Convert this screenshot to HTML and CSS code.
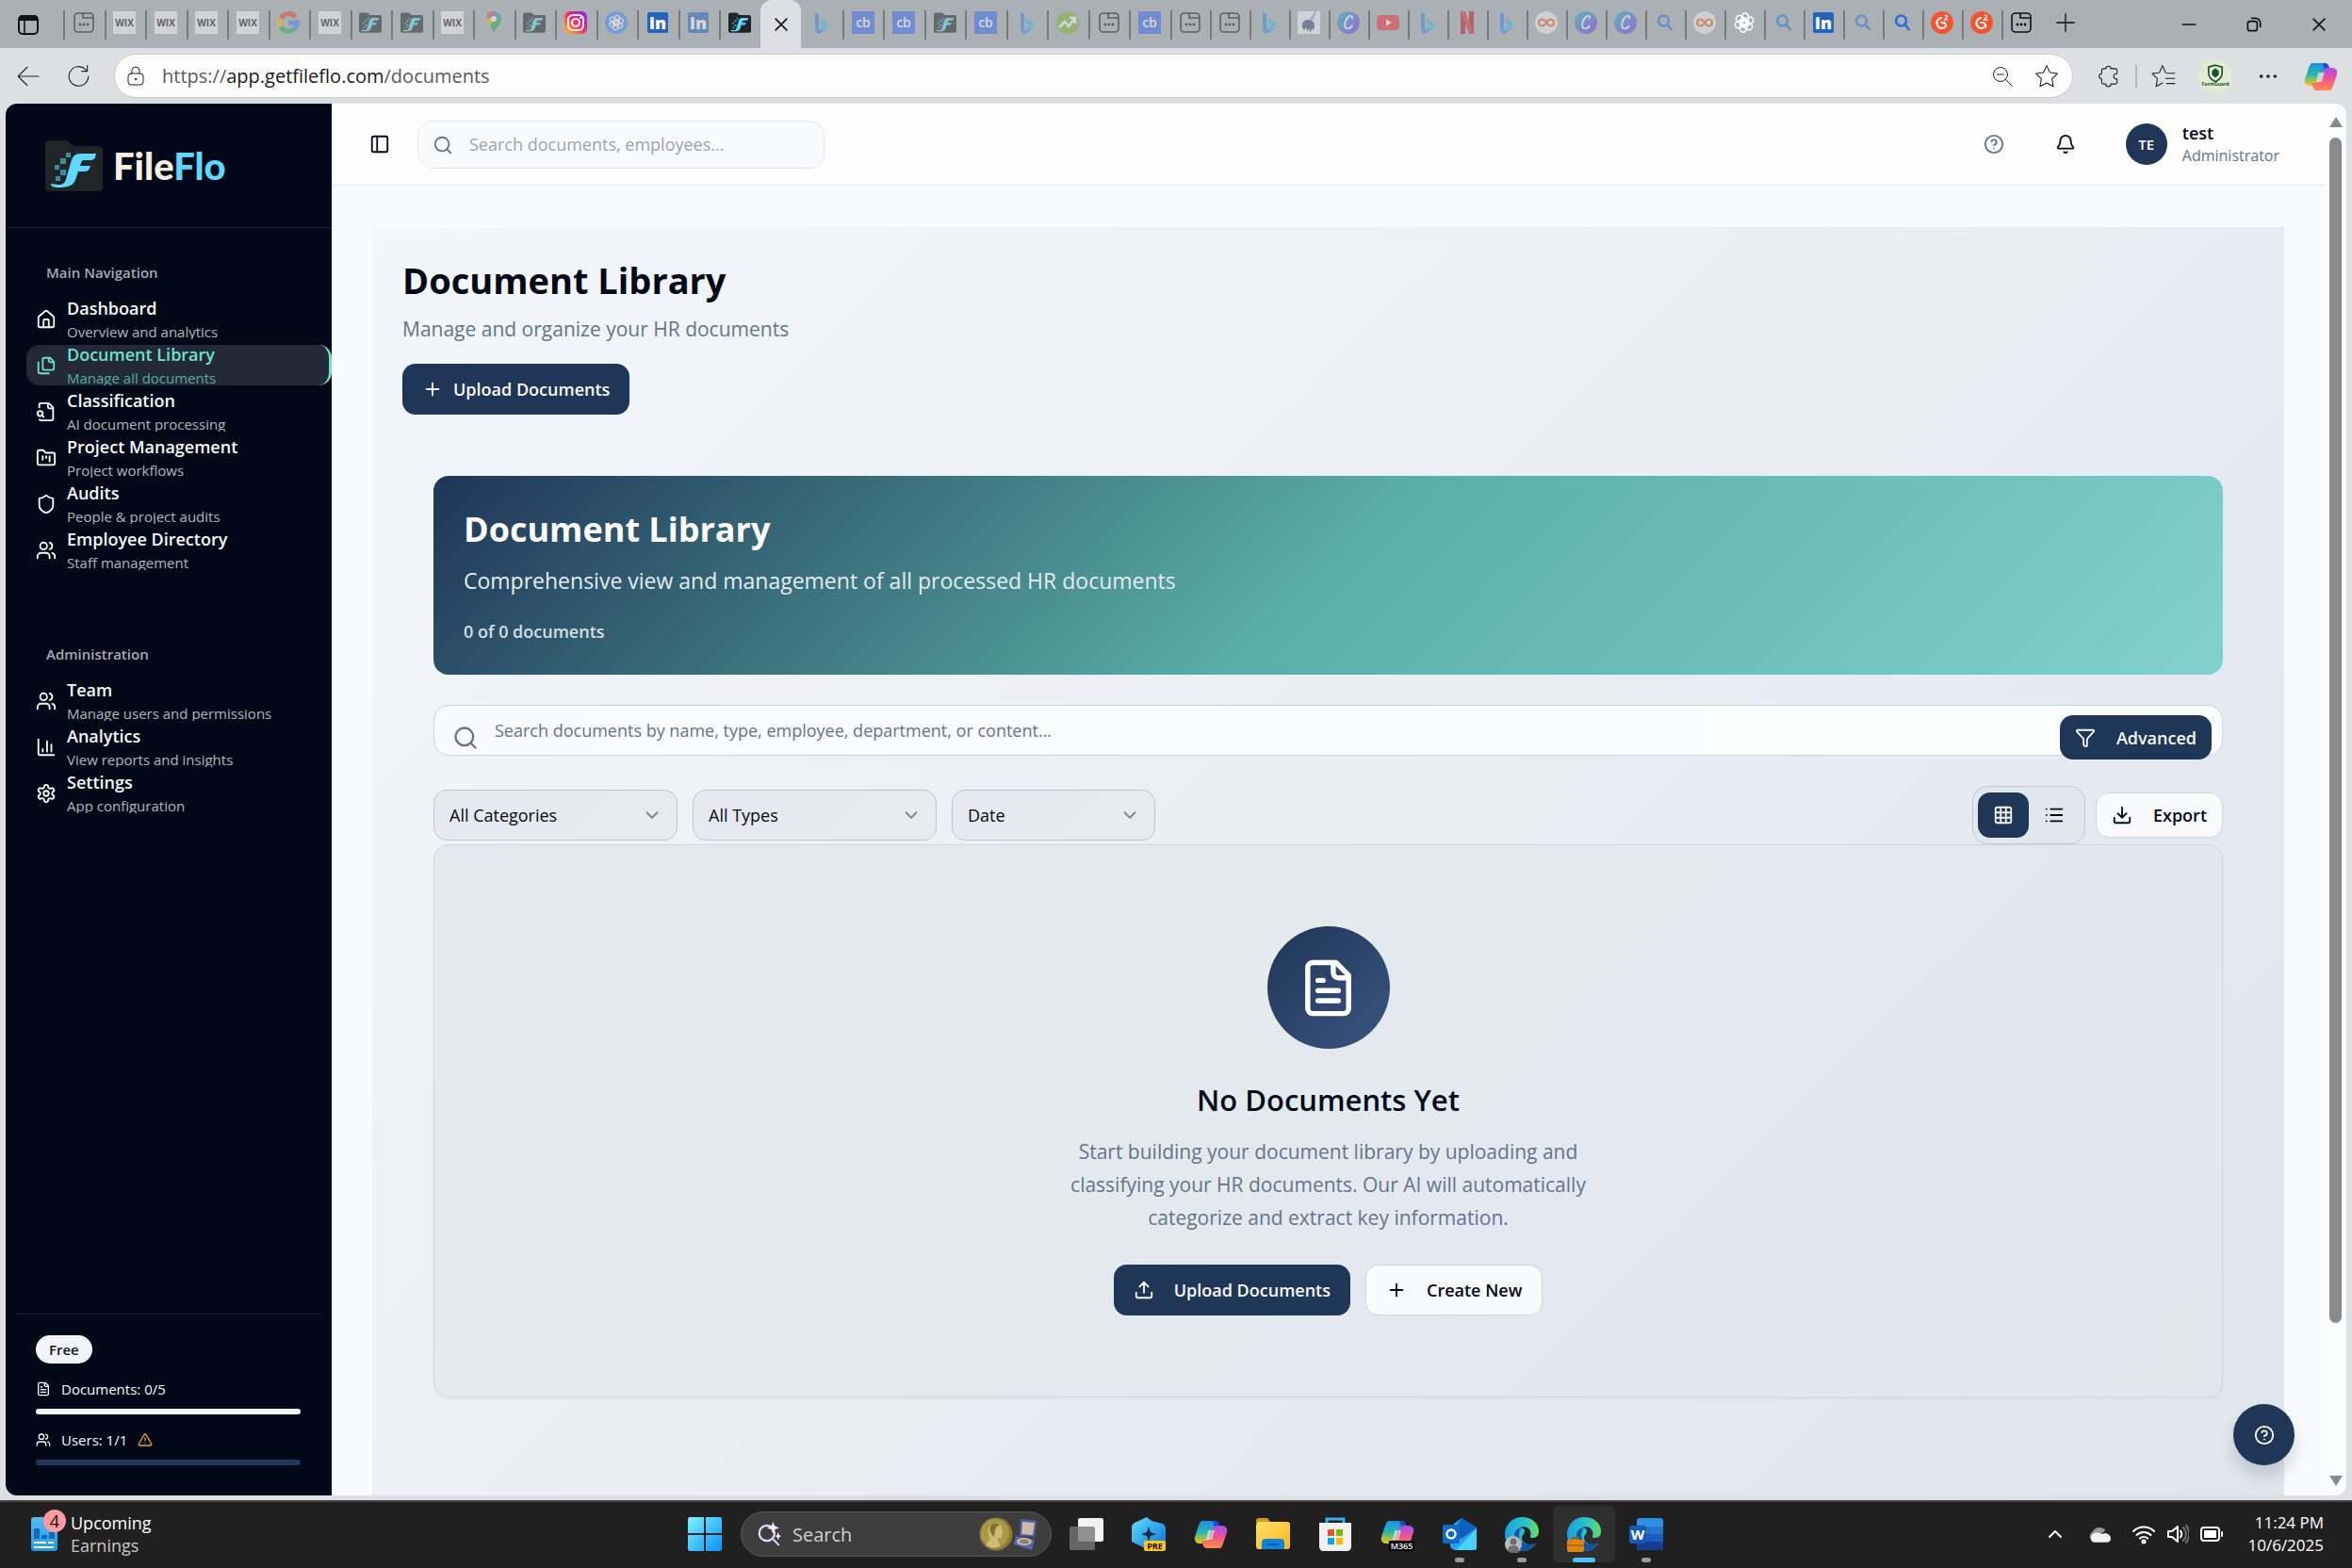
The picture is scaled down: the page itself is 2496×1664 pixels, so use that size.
FILE: index.html
```html
<!DOCTYPE html>
<html lang="en">
<head>
  <meta charset="UTF-8">
  <title>FileFlo - Document Library</title>
  <link rel="stylesheet" href="styles.css">
</head>
<body>

  <!-- Gradients shared by the icons (must stay rendered, so not display: none) -->
  <svg class="gradients" aria-hidden="true">
    <defs>
      <linearGradient id="g-bing" x1="0" y1="0" x2="0" y2="1"><stop offset="0" stop-color="#3a9be0"/><stop offset=".6" stop-color="#4cc3ea"/><stop offset="1" stop-color="#3c63dd"/></linearGradient>
      <linearGradient id="g-canva" x1="0" y1="0" x2="1" y2="1"><stop offset="0" stop-color="#15b9c5"/><stop offset="1" stop-color="#7d2ae8"/></linearGradient>
      <linearGradient id="g-insta" x1="0" y1="1" x2="1" y2="0"><stop offset="0" stop-color="#ffc93c"/><stop offset=".35" stop-color="#ff5a36"/><stop offset=".6" stop-color="#f0188c"/><stop offset="1" stop-color="#7a2bff"/></linearGradient>
      <linearGradient id="g-win" x1="0" y1="0" x2="1" y2="1"><stop offset="0" stop-color="#7df3ff"/><stop offset="1" stop-color="#0a90fa"/></linearGradient>
      <linearGradient id="g-cop1" x1="0" y1="0" x2="0" y2="1"><stop offset="0" stop-color="#1c8fe8"/><stop offset=".5" stop-color="#29b6b0"/><stop offset="1" stop-color="#ffc800"/></linearGradient>
      <linearGradient id="g-cop2" x1="0" y1="0" x2="0" y2="1"><stop offset="0" stop-color="#a64df0"/><stop offset=".5" stop-color="#f0568c"/><stop offset="1" stop-color="#ff8a4c"/></linearGradient>
      <linearGradient id="g-edge" x1="0" y1="0" x2="1" y2="0"><stop offset="0" stop-color="#1aa0e0"/><stop offset=".6" stop-color="#2cc4c8"/><stop offset="1" stop-color="#6adf5a"/></linearGradient>
      <linearGradient id="g-folder" x1="0" y1="0" x2="1" y2="1"><stop offset="0" stop-color="#ffdf6b"/><stop offset="1" stop-color="#fbb81a"/></linearGradient>
      <linearGradient id="g-pre" x1="0" y1="0" x2="1" y2="1"><stop offset="0" stop-color="#5fe0fb"/><stop offset="1" stop-color="#0a6fd8"/></linearGradient>
      <linearGradient id="g-widget" x1="0" y1="0" x2="0" y2="1"><stop offset="0" stop-color="#5cb8f5"/><stop offset="1" stop-color="#1d9bdf"/></linearGradient>
    </defs>
  </svg>

  <!-- Icon sprite -->
  <svg class="sprite" aria-hidden="true">
    <!-- Favicons -->
    <symbol id="f-page" viewBox="0 0 24 24"><g fill="none" stroke="#111" stroke-width="1.6"><rect x="2" y="2" width="20" height="20" rx="4"/><path d="M11 2v5h11"/></g><g fill="#111"><circle cx="8" cy="14" r="1.4"/><circle cx="12" cy="14" r="1.4"/><circle cx="16" cy="14" r="1.4"/></g></symbol>
    <symbol id="f-wix" viewBox="0 0 24 24"><rect width="24" height="24" fill="#f4f6f8"/><text x="12" y="16" text-anchor="middle" font-size="10" font-weight="700" fill="#111">WIX</text></symbol>
    <symbol id="f-google" viewBox="0 0 24 24"><g fill="none" stroke-width="5"><path d="M19.500 6.200A9.300 9.300 0 0 0 4 7.500" stroke="#ea4335"/><path d="M4 7.500a9.300 9.300 0 0 0 0 9" stroke="#fbbc05"/><path d="M4 16.500a9.300 9.300 0 0 0 14 2.500" stroke="#34a853"/><path d="M18 19a9 9 0 0 0 3.200-7H12" stroke="#4285f4"/></g></symbol>
    <symbol id="f-fileflo" viewBox="0 0 61 55"><path d="M0 6q0-5 5-5h18l7 6h26q5 0 5 5v38q0 5-5 5H5q-5 0-5-5z" fill="#212528"/><path d="M54 15H38c-7 0-9 3-11 10l-5 17c-1 4-3 6-8 6l-8-1c0 3 3 4 8 4 14 0 17-4 19-11l2-6h7c3 0 5-2 6-6H37l1-3c1-3 2-3 4-3h6c4 0 5-2 6-7z" fill="#5fd9fb"/><g fill="#3c8ca3"><rect x="22" y="14" width="5" height="5"/><rect x="16" y="20" width="6" height="6"/><rect x="10" y="27" width="5" height="5"/><rect x="16" y="32" width="6" height="6"/><rect x="11" y="39" width="5" height="5"/></g></symbol>
    <symbol id="f-maps" viewBox="0 0 24 24"><path d="M12 0a8 8 0 0 0-8 8h16a8 8 0 0 0-8-8z" fill="#4285f4"/><path d="M12 0a8 8 0 0 0-7 4l5 4z" fill="#ea4335"/><path d="M4 8c0 3 2 5 4 7l7-9-5 0z" fill="#fbbc05"/><path d="M20 8c0 7-6 8-8 16-1-4-2-6-4-9l9-11c2 1 3 3 3 4z" fill="#34a853"/><circle cx="12" cy="8" r="3" fill="#fff"/></symbol>
    <symbol id="f-insta" viewBox="0 0 24 24"><rect width="24" height="24" rx="6" fill="url(#g-insta)"/><g fill="none" stroke="#fff" stroke-width="2"><rect x="4" y="4" width="16" height="16" rx="5"/><circle cx="12" cy="12" r="4"/></g><circle cx="17" cy="7" r="1.200" fill="#fff"/></symbol>
    <symbol id="i-knot" viewBox="0 0 24 24"><g fill="none" stroke="currentColor" stroke-width="1.500"><rect x="9.500" y="2" width="7" height="12.500" rx="3.500"/><rect x="9.500" y="2" width="7" height="12.500" rx="3.500" transform="rotate(60 12 12)"/><rect x="9.500" y="2" width="7" height="12.500" rx="3.500" transform="rotate(120 12 12)"/><rect x="9.500" y="2" width="7" height="12.500" rx="3.500" transform="rotate(180 12 12)"/><rect x="9.500" y="2" width="7" height="12.500" rx="3.500" transform="rotate(240 12 12)"/><rect x="9.500" y="2" width="7" height="12.500" rx="3.500" transform="rotate(300 12 12)"/></g></symbol>
    <symbol id="f-gptblue" viewBox="0 0 24 24"><circle cx="12" cy="12" r="12" fill="#4a8af4"/><svg x="3" y="3" width="18" height="18" color="#fff"><use href="#i-knot"/></svg></symbol>
    <symbol id="f-linkedin" viewBox="0 0 24 24"><rect x="1" y="1" width="22" height="22" rx="2" fill="#2464c0"/><text x="12" y="19" text-anchor="middle" font-size="18" font-weight="800" fill="#fff">in</text></symbol>
    <symbol id="f-bing" viewBox="0 0 24 24"><path d="M5 1l4 1.500V17l-1 5-3-2z" fill="#3a7fe8"/><path d="M10.500 8l6 3c3 2 3 5 1 8l-7 4c-2 1-4 0-5-2l7-5-1-4z" fill="url(#g-bing)"/></symbol>
    <symbol id="f-cb" viewBox="0 0 24 24"><rect width="24" height="24" fill="#3c69f0"/><text x="12" y="17" text-anchor="middle" font-size="14" font-weight="600" fill="#fff">cb</text></symbol>
    <symbol id="f-chart" viewBox="0 0 24 24"><circle cx="12" cy="12" r="12" fill="#82b541"/><path d="M3 17l6-6 4 5 6-8M14 7h6v6" fill="none" stroke="#fff" stroke-width="2.600"/></symbol>
    <symbol id="f-horse" viewBox="0 0 24 24"><rect width="24" height="24" fill="#f2f5fa"/><path d="M13 9l6-9 1 1-5 9z" fill="#8b97b3"/><path d="M5 17c-1-5 2-8 6-8s7 2 7 7l-1 4-2-2-1 5-2-5-1 4-2-5-2 3z" fill="#3d527c"/></symbol>
    <symbol id="f-canva" viewBox="0 0 24 24"><circle cx="12" cy="12" r="12" fill="url(#g-canva)"/><path d="M16 8c1-4-3-4-5-1-3 3-4 10-1 11 3 1 5-1 6-3" fill="none" stroke="#fff" stroke-width="1.800"/></symbol>
    <symbol id="f-youtube" viewBox="0 0 24 24"><rect y="4" width="24" height="16" rx="4" fill="#f03040"/><path d="M10 8.500v7l6-3.500z" fill="#fff"/></symbol>
    <symbol id="f-netflix" viewBox="0 0 24 24"><path d="M5 0h5v24H5zM14 0h5v24h-5z" fill="#b81d24"/><path d="M5 0h5l9 24h-5z" fill="#e5333a"/></symbol>
    <symbol id="f-loop" viewBox="0 0 24 24"><circle cx="12" cy="12" r="12" fill="#f4efec"/><path d="M12 12c-3-5-8-4-8 0s5 5 8 0 8-4 8 0-5 5-8 0z" fill="none" stroke="#e8622c" stroke-width="2"/></symbol>
    <symbol id="f-search" viewBox="0 0 24 24"><g fill="none" stroke="#2a6fdc" stroke-width="2.600"><circle cx="10.500" cy="10" r="5.500"/><path d="M14.500 14l5 6"/></g></symbol>
    <symbol id="f-g2" viewBox="0 0 24 24"><circle cx="12" cy="12" r="12" fill="#f9522f"/><path d="M12 7a5.500 5.500 0 1 0 4.500 8.500l-2-3.500h-4" fill="none" stroke="#fff" stroke-width="2"/><path d="M14.500 5c2-2 4 0 2.500 1.500L14.500 9h4" fill="none" stroke="#fff" stroke-width="1.200"/></symbol>

    <!-- Browser icons -->
    <symbol id="i-tabmenu" viewBox="0 0 24 24"><rect x="2" y="3" width="20" height="19" rx="4" fill="none" stroke="currentColor" stroke-width="2"/><path d="M2 8V6q0-4 4-4h12q4 0 4 4v2z" fill="currentColor"/><path d="M8 8v14" stroke="currentColor" stroke-width="1.600"/></symbol>
    <symbol id="i-close" viewBox="0 0 24 24"><path d="M5 5l14 14M19 5L5 19"/></symbol>
    <symbol id="i-plus" viewBox="0 0 24 24"><path d="M5 12h14M12 5v14"/></symbol>
    <symbol id="i-min" viewBox="0 0 24 24"><path d="M4 12h16"/></symbol>
    <symbol id="i-restore" viewBox="0 0 24 24"><rect x="4" y="8" width="12" height="12" rx="3"/><path d="M9 4h5a6 6 0 0 1 6 6v5"/></symbol>
    <symbol id="i-back" viewBox="0 0 24 24"><path d="M22 12H2M11 3l-9 9 9 9"/></symbol>
    <symbol id="i-reload" viewBox="0 0 24 24"><path d="M21 12a9.500 9.500 0 1 1-3-7l2 2M20 1.500V7h-5.500"/></symbol>
    <symbol id="i-lock" viewBox="0 0 24 24"><rect x="4" y="9" width="16" height="12" rx="3"/><path d="M8 9V6a4 4 0 0 1 8 0v3"/><circle cx="12" cy="15" r=".8"/></symbol>
    <symbol id="i-zoomout" viewBox="0 0 24 24"><circle cx="10" cy="10" r="7.500"/><path d="M15.500 15.500l7 7M6.500 10h7"/></symbol>
    <symbol id="i-star" viewBox="0 0 24 24"><path d="M12 1.500l3.200 6.800 7.300 1-5.300 5.200 1.300 7.500L12 18.400 5.500 22l1.300-7.500L1.500 9.300l7.300-1z"/></symbol>
    <symbol id="i-puzzle" viewBox="0 0 24 24"><path d="M9 4.500a2.500 2.500 0 0 1 5 0h4.500a1.500 1.500 0 0 1 1.500 1.500v3.500a2.600 2.600 0 1 0 0 5V18a1.500 1.500 0 0 1-1.500 1.500H14a2.500 2.500 0 0 1-5 0H6.500A1.500 1.500 0 0 1 5 18v-3.500a2.500 2.500 0 0 1 0-5V6a1.500 1.500 0 0 1 1.500-1.500z"/></symbol>
    <symbol id="i-favs" viewBox="0 0 24 24"><path d="M14 8.500L11 1.500 8 8.300l-7 1 5 5.200L4.700 22l6.300-3.600M15 9h8M14 14h9M15 19h8"/></symbol>
    <symbol id="i-dots" viewBox="0 0 24 24"><g fill="currentColor" stroke="none"><circle cx="4" cy="12" r="2"/><circle cx="12" cy="12" r="2"/><circle cx="20" cy="12" r="2"/></g></symbol>
    <symbol id="i-farm" viewBox="0 0 35 35"><circle cx="17.500" cy="17.500" r="17.500" fill="#e2ecd0"/><path d="M17.500 6l7 2v6c0 4-3 7-7 9-4-2-7-5-7-9V8z" fill="none" stroke="#175033" stroke-width="1.600"/><path d="M14 12l3.500-3 3.500 3v4l-3.500 3-3.500-3z" fill="#175033"/><text x="17.500" y="27" text-anchor="middle" font-size="5" font-weight="700" fill="#175033">FarmGuard</text></symbol>
    <symbol id="i-copilot" viewBox="0 0 36 36"><path d="M9 4h13c3 0 4 2 5 5l1 3h-5c-3 0-4 2-5 5l-2 7c-1 3-2 4-5 4H6c-4 0-6-3-5-7l4-12c1-3 2-5 4-5z" fill="url(#g-cop1)"/><path d="M20 4h2c3 0 4 2 5 5l1 3h-6z" fill="#1a4bd0"/><path d="M27 32H14c-3 0-4-2-5-5l-1-3h5c3 0 4-2 5-5l2-7c1-3 2-4 5-4h5c4 0 6 3 5 7l-4 12c-1 3-2 5-4 5z" fill="url(#g-cop2)" transform="translate(0 1)"/><path d="M15 14h7l-3 10h-6z" class="copilot-gap"/></symbol>

    <!-- App icons -->
    <symbol id="i-panel" viewBox="0 0 24 24"><rect x="3" y="3" width="18" height="18" rx="2"/><path d="M9 3v18"/></symbol>
    <symbol id="i-search" viewBox="0 0 24 24"><circle cx="11" cy="11" r="8"/><path d="m21 21-4.300-4.300"/></symbol>
    <symbol id="i-help" viewBox="0 0 24 24"><circle cx="12" cy="12" r="10"/><path d="M9.090 9a3 3 0 0 1 5.830 1c0 2-3 3-3 3M12 17h.01"/></symbol>
    <symbol id="i-bell" viewBox="0 0 24 24"><path d="M10.270 21a2 2 0 0 0 3.460 0M3.260 15.330A1 1 0 0 0 4 17h16a1 1 0 0 0 .74-1.670C19.410 13.960 18 12.500 18 8A6 6 0 0 0 6 8c0 4.500-1.410 5.960-2.740 7.330"/></symbol>
    <symbol id="i-house" viewBox="0 0 24 24"><path d="M15 21v-8a1 1 0 0 0-1-1h-4a1 1 0 0 0-1 1v8"/><path d="M3 10a2 2 0 0 1 .709-1.528l7-5.999a2 2 0 0 1 2.582 0l7 5.999A2 2 0 0 1 21 10v9a2 2 0 0 1-2 2H5a2 2 0 0 1-2-2z"/></symbol>
    <symbol id="i-filecopy" viewBox="0 0 24 24"><path d="M15 3v3a2 2 0 0 0 2 2h4"/><path d="M10 3h6.500L21 7.500V15a2 2 0 0 1-2 2h-9a2 2 0 0 1-2-2V5a2 2 0 0 1 2-2z"/><path d="M3 8v11a2 2 0 0 0 2 2h10"/></symbol>
    <symbol id="i-filesearch" viewBox="0 0 24 24"><path d="M14 2v4a2 2 0 0 0 2 2h4"/><path d="M4.268 21a2 2 0 0 0 1.727 1H18a2 2 0 0 0 2-2V7l-5-5H6a2 2 0 0 0-2 2v3"/><path d="m9 18-1.500-1.500"/><circle cx="5" cy="14" r="3"/></symbol>
    <symbol id="i-kanban" viewBox="0 0 24 24"><path d="M4 20h16a2 2 0 0 0 2-2V8a2 2 0 0 0-2-2h-7.930a2 2 0 0 1-1.660-.9l-.82-1.200A2 2 0 0 0 7.930 3H4a2 2 0 0 0-2 2v13c0 1.100.9 2 2 2Z"/><path d="M8 10v4M12 10v2M16 10v6"/></symbol>
    <symbol id="i-shield" viewBox="0 0 24 24"><path d="M20 13c0 5-3.500 7.500-7.660 8.950a1 1 0 0 1-.67-.01C7.500 20.500 4 18 4 13V6a1 1 0 0 1 1-1c2 0 4.500-1.200 6.240-2.720a1.170 1.170 0 0 1 1.520 0C14.510 3.810 17 5 19 5a1 1 0 0 1 1 1z"/></symbol>
    <symbol id="i-users" viewBox="0 0 24 24"><path d="M16 21v-2a4 4 0 0 0-4-4H6a4 4 0 0 0-4 4v2"/><circle cx="9" cy="7" r="4"/><path d="M22 21v-2a4 4 0 0 0-3-3.870M16 3.130a4 4 0 0 1 0 7.750"/></symbol>
    <symbol id="i-chart" viewBox="0 0 24 24"><path d="M3 3v16a2 2 0 0 0 2 2h16M18 17V9M13 17V5M8 17v-3"/></symbol>
    <symbol id="i-gear" viewBox="0 0 24 24"><path d="M12.220 2h-.44a2 2 0 0 0-2 2v.18a2 2 0 0 1-1 1.730l-.43.25a2 2 0 0 1-2 0l-.15-.08a2 2 0 0 0-2.730.73l-.22.38a2 2 0 0 0 .73 2.730l.15.1a2 2 0 0 1 1 1.720v.51a2 2 0 0 1-1 1.740l-.15.09a2 2 0 0 0-.73 2.730l.22.38a2 2 0 0 0 2.730.73l.15-.08a2 2 0 0 1 2 0l.43.25a2 2 0 0 1 1 1.730V20a2 2 0 0 0 2 2h.44a2 2 0 0 0 2-2v-.18a2 2 0 0 1 1-1.730l.43-.25a2 2 0 0 1 2 0l.15.08a2 2 0 0 0 2.730-.73l.22-.39a2 2 0 0 0-.73-2.730l-.15-.08a2 2 0 0 1-1-1.740v-.5a2 2 0 0 1 1-1.740l.15-.09a2 2 0 0 0 .73-2.730l-.22-.38a2 2 0 0 0-2.730-.73l-.15.08a2 2 0 0 1-2 0l-.43-.25a2 2 0 0 1-1-1.730V4a2 2 0 0 0-2-2z"/><circle cx="12" cy="12" r="3"/></symbol>
    <symbol id="i-file" viewBox="0 0 24 24"><path d="M15 2H6a2 2 0 0 0-2 2v16a2 2 0 0 0 2 2h12a2 2 0 0 0 2-2V7Z"/><path d="M14 2v4a2 2 0 0 0 2 2h4M10 9H8M16 13H8M16 17H8"/></symbol>
    <symbol id="i-warn" viewBox="0 0 24 24"><path d="m21.730 18-8-14a2 2 0 0 0-3.480 0l-8 14A2 2 0 0 0 4 21h16a2 2 0 0 0 1.730-3M12 9v4M12 17h.01"/></symbol>
    <symbol id="i-funnel" viewBox="0 0 24 24"><path d="M10 20a1 1 0 0 0 .553.895l2 1A1 1 0 0 0 14 21v-7a2 2 0 0 1 .517-1.341L21.740 4.670A1 1 0 0 0 21 3H3a1 1 0 0 0-.742 1.670l7.225 7.989A2 2 0 0 1 10 14z"/></symbol>
    <symbol id="i-chev" viewBox="0 0 24 24"><path d="m6 9 6 6 6-6"/></symbol>
    <symbol id="i-grid" viewBox="0 0 24 24"><rect x="3" y="3" width="18" height="18" rx="2"/><path d="M3 9h18M3 15h18M9 3v18M15 3v18"/></symbol>
    <symbol id="i-list" viewBox="0 0 24 24"><path d="M3 12h.01M3 19h.01M3 5h.01M8 12h13M8 19h13M8 5h13"/></symbol>
    <symbol id="i-download" viewBox="0 0 24 24"><path d="M12 15V3M21 15v4a2 2 0 0 1-2 2H5a2 2 0 0 1-2-2v-4M7 10l5 5 5-5"/></symbol>
    <symbol id="i-upload" viewBox="0 0 24 24"><path d="M12 3v12M17 8l-5-5-5 5M21 15v4a2 2 0 0 1-2 2H5a2 2 0 0 1-2-2v-4"/></symbol>

    <!-- Taskbar icons -->
    <symbol id="t-widget" viewBox="0 0 28 36"><rect width="28" height="36" rx="3" fill="url(#g-widget)"/><g fill="#0b6cb8"><rect x="3" y="12" width="6" height="11" rx="1"/><rect x="11" y="19" width="6" height="4" rx="1"/><rect x="19" y="16" width="6" height="7" rx="1"/></g><g fill="#fff"><rect x="3" y="26" width="13" height="2"/><rect x="18" y="26" width="6" height="2"/><rect x="3" y="31" width="21" height="2"/></g></symbol>
    <symbol id="t-win" viewBox="0 0 36 36"><path d="M0 2q0-2 2-2h15v17H0zM19 0h15q2 0 2 2v15H19zM0 19h17v17H2q-2 0-2-2zM19 19h17v15q0 2-2 2H19z" fill="url(#g-win)"/></symbol>
    <symbol id="t-search" viewBox="0 0 24 24"><circle cx="10" cy="11" r="7.500" fill="none" stroke="#d9e4ff" stroke-width="2"/><path d="M15 16l7 7" stroke="#e5c8ef" stroke-width="2"/><path d="M16 0l1.500 4L22 6l-4.500 1.500L16 12l-1.500-4.500L10 6l4.500-2zM21 10l1 3 2 1-2 1-1 3-1-3-2-1 2-1z" fill="#fbeaff"/></symbol>
    <symbol id="t-medal" viewBox="0 0 36 36"><circle cx="18" cy="18" r="17.500" fill="#8e7a34"/><circle cx="17" cy="17" r="15" fill="#ad9848"/><path d="M13 8c5-4 12-1 11 5l2 4-2 1v4l-5 1 4 8c-6 3-13 2-16-2l5-6c-3-5-3-12 1-15z" fill="#cdbb72"/><path d="M13 8c5-3 8-1 9 1-5 0-5 6-6 12-4-3-6-9-3-13z" fill="#85722f"/></symbol>
    <symbol id="t-case" viewBox="0 0 26 36"><path d="M8 2l17 2-2 17-16-1z" fill="#4d62a6"/><path d="M10 5l13 1-2 13-12-1z" fill="#cdb9a8"/><path d="M3 20l20 4-3 11-19-6z" fill="#5169b5"/><ellipse cx="12" cy="26" rx="8" ry="4" fill="#cbb8a4"/><ellipse cx="12" cy="26" rx="5" ry="2.500" fill="#8f7f6c"/></symbol>
    <symbol id="t-tasks" viewBox="0 0 36 36"><rect x="9" y="1" width="27" height="25" rx="2" fill="#f2f2f2"/><rect y="10" width="27" height="25" rx="2" fill="#777" fill-opacity=".8"/></symbol>
    <symbol id="t-pre" viewBox="0 0 36 36"><path d="M16 0l5 4 12 3q3 2 3 6v13L18 35 0 26V10q0-2 3-4z" fill="url(#g-pre)"/><path d="M18 10l2 6 6 2-6 2-2 6-2-6-6-2 6-2z" fill="#142a4a"/><rect x="13" y="25" width="23" height="11" rx="2" fill="#ffc61a"/><text x="24.500" y="34" text-anchor="middle" font-size="9" font-weight="700" fill="#111">PRE</text></symbol>
    <symbol id="t-folder" viewBox="0 0 36 36"><path d="M0 4q0-3 3-3h9l4 5H0z" fill="#d99a10"/><path d="M0 9q0-4 4-4h29q3 0 3 3v23q0 3-3 3H3q-3 0-3-3z" fill="url(#g-folder)"/><path d="M6 27q0-4 4-4h16q4 0 4 4v7H6z" fill="#0f83d8"/><rect x="12" y="28" width="12" height="2" fill="#0a5aa6"/></symbol>
    <symbol id="t-store" viewBox="0 0 36 36"><path d="M9 8V2h18v6" fill="none" stroke="#35b2f0" stroke-width="3"/><path d="M1 6h34v25q0 5-5 5H6q-5 0-5-5z" fill="#f1f1f1"/><path fill="#f25022" d="M10 13h7v7h-7z"/><path fill="#7fba00" d="M19 13h7v7h-7z"/><path fill="#00a4ef" d="M10 22h7v7h-7z"/><path fill="#ffb900" d="M19 22h7v7h-7z"/></symbol>
    <symbol id="t-m365" viewBox="0 0 36 36"><svg width="36" height="36"><use href="#i-copilot"/></svg><rect x="9" y="25" width="27" height="11" rx="1" fill="#000"/><text x="22.500" y="34" text-anchor="middle" font-size="9" font-weight="600" fill="#fff">M365</text></symbol>
    <symbol id="t-outlook" viewBox="0 0 36 36"><path d="M8 10l12-9 16 10v21q0 3-3 3H14q-4 0-6-4z" fill="#2f9fe8"/><path d="M20 1l16 10-16 12-10-6z" fill="#0c5fbe"/><path d="M36 12v20q0 3-3 3H14z" fill="#46d1fb"/><rect y="8" width="18" height="20" rx="2" fill="#1068c8"/><circle cx="9" cy="18" r="4.500" fill="none" stroke="#fff" stroke-width="2.400"/></symbol>
    <symbol id="t-edge" viewBox="0 0 36 36"><path d="M18 0C8 0 0 8 0 18c0 11 9 18 18 18 7 0 12-3 15-8-7 3-15 0-15-6 0-3 3-4 3-7 0-2-2-4-5-4 0 0 8-3 11 4 2 5-3 7 3 7 4 0 6-3 6-7C36 6 28 0 18 0z" fill="url(#g-edge)"/><path d="M10 20c0-6 4-9 8-8-2 1-3 4-3 7 0 8 8 12 18 9-3 5-8 8-15 8-5-3-8-9-8-16z" fill="#0f56a8"/></symbol>
    <symbol id="t-person" viewBox="0 0 18 18"><rect width="18" height="18" rx="9" fill="#b9b9b9"/><circle cx="9" cy="6" r="3.500" fill="#6d6d6d"/><path d="M3 16q0-6 6-6t6 6-12 0z" fill="#6d6d6d"/></symbol>
    <symbol id="t-bag" viewBox="0 0 18 18"><path d="M6 5V2h6v3" fill="none" stroke="#a75f06" stroke-width="2"/><rect y="4" width="18" height="13" rx="2" fill="#e2870e"/><path d="M0 10h18" stroke="#a75f06" stroke-width="1.500"/></symbol>
    <symbol id="t-word" viewBox="0 0 36 36"><rect x="8" y="1" width="28" height="34" rx="3" fill="#2f8fe0"/><path d="M8 10h28v8H8z" fill="#2475cf"/><path d="M8 18h28v8H8z" fill="#1b5cbe"/><path d="M8 26h28v6q0 3-3 3H11q-3 0-3-3z" fill="#143f93"/><rect y="9" width="18" height="19" rx="2" fill="#1a58b8"/><text x="9" y="24" text-anchor="middle" font-size="15" font-weight="700" fill="#fff">W</text></symbol>
    <symbol id="t-cloud" viewBox="0 0 24 24"><path d="M6 19a5 5 0 0 1-1-9 8 8 0 0 1 13-2z" fill="#9a9a9a"/><path d="M6 20a5 5 0 0 1 1-9c3-1 6 0 7 1 4-2 9 0 9 4s-2 4-4 4z" fill="#f3f3f3"/></symbol>
    <symbol id="t-wifi" viewBox="0 0 24 24"><path d="M1 9a16 16 0 0 1 22 0M4.500 13a11 11 0 0 1 15 0M8 16.500a6 6 0 0 1 8 0"/><circle cx="12" cy="20" r="1.500"/></symbol>
    <symbol id="t-volume" viewBox="0 0 24 24"><path d="M2 9v6h4l6 5V4L6 9zM15 8.500a6 6 0 0 1 0 7"/><path d="M18 5a10 10 0 0 1 0 14M21 3a14 14 0 0 1 0 18" opacity=".35"/></symbol>
    <symbol id="t-battery" viewBox="0 0 24 24"><rect x="1" y="5" width="19" height="14" rx="3"/><rect x="4" y="8" width="13" height="8" fill="currentColor" stroke="none"/><path d="M23 10v4"/></symbol>
  </svg>

  <!-- Tab strip -->
  <div class="tabstrip">
    <button class="tab-menu" aria-label="Tab actions"><svg class="s24"><use href="#i-tabmenu"/></svg></button>
    <div class="tabs">
      <button class="tab asleep"><svg><use href="#f-page"/></svg></button>
      <button class="tab asleep"><svg><use href="#f-wix"/></svg></button>
      <button class="tab asleep"><svg><use href="#f-wix"/></svg></button>
      <button class="tab asleep"><svg><use href="#f-wix"/></svg></button>
      <button class="tab asleep"><svg><use href="#f-wix"/></svg></button>
      <button class="tab asleep"><svg><use href="#f-google"/></svg></button>
      <button class="tab asleep"><svg><use href="#f-wix"/></svg></button>
      <button class="tab asleep"><svg><use href="#f-fileflo"/></svg></button>
      <button class="tab asleep"><svg><use href="#f-fileflo"/></svg></button>
      <button class="tab asleep"><svg><use href="#f-wix"/></svg></button>
      <button class="tab asleep"><svg><use href="#f-maps"/></svg></button>
      <button class="tab asleep"><svg><use href="#f-fileflo"/></svg></button>
      <button class="tab"><svg><use href="#f-insta"/></svg></button>
      <button class="tab asleep"><svg><use href="#f-gptblue"/></svg></button>
      <button class="tab"><svg><use href="#f-linkedin"/></svg></button>
      <button class="tab asleep"><svg><use href="#f-linkedin"/></svg></button>
      <button class="tab"><svg><use href="#f-fileflo"/></svg></button>
      <button class="tab current" aria-label="Close tab"><svg class="icon"><use href="#i-close"/></svg></button>
      <button class="tab asleep"><svg><use href="#f-bing"/></svg></button>
      <button class="tab asleep"><svg><use href="#f-cb"/></svg></button>
      <button class="tab asleep"><svg><use href="#f-cb"/></svg></button>
      <button class="tab asleep"><svg><use href="#f-fileflo"/></svg></button>
      <button class="tab asleep"><svg><use href="#f-cb"/></svg></button>
      <button class="tab asleep"><svg><use href="#f-bing"/></svg></button>
      <button class="tab asleep"><svg><use href="#f-chart"/></svg></button>
      <button class="tab asleep"><svg><use href="#f-page"/></svg></button>
      <button class="tab asleep"><svg><use href="#f-cb"/></svg></button>
      <button class="tab narrow asleep"><svg><use href="#f-page"/></svg></button>
      <button class="tab narrow asleep"><svg><use href="#f-page"/></svg></button>
      <button class="tab narrow asleep"><svg><use href="#f-bing"/></svg></button>
      <button class="tab narrow asleep"><svg><use href="#f-horse"/></svg></button>
      <button class="tab narrow asleep"><svg><use href="#f-canva"/></svg></button>
      <button class="tab narrow asleep"><svg><use href="#f-youtube"/></svg></button>
      <button class="tab narrow asleep"><svg><use href="#f-bing"/></svg></button>
      <button class="tab narrow asleep"><svg><use href="#f-netflix"/></svg></button>
      <button class="tab narrow asleep"><svg><use href="#f-bing"/></svg></button>
      <button class="tab narrow asleep"><svg><use href="#f-loop"/></svg></button>
      <button class="tab narrow asleep"><svg><use href="#f-canva"/></svg></button>
      <button class="tab narrow asleep"><svg><use href="#f-canva"/></svg></button>
      <button class="tab narrow asleep"><svg><use href="#f-search"/></svg></button>
      <button class="tab narrow asleep"><svg><use href="#f-loop"/></svg></button>
      <button class="tab narrow knot"><svg><use href="#i-knot"/></svg></button>
      <button class="tab narrow asleep"><svg><use href="#f-search"/></svg></button>
      <button class="tab narrow"><svg><use href="#f-linkedin"/></svg></button>
      <button class="tab narrow asleep"><svg><use href="#f-search"/></svg></button>
      <button class="tab narrow"><svg><use href="#f-search"/></svg></button>
      <button class="tab narrow"><svg><use href="#f-g2"/></svg></button>
      <button class="tab narrow"><svg><use href="#f-g2"/></svg></button>
      <button class="tab narrow"><svg><use href="#f-page"/></svg></button>
    </div>
    <button class="new-tab" aria-label="New tab"><svg class="icon"><use href="#i-plus"/></svg></button>
    <div class="window-buttons">
      <button aria-label="Minimize"><svg class="icon"><use href="#i-min"/></svg></button>
      <button aria-label="Restore"><svg class="icon"><use href="#i-restore"/></svg></button>
      <button aria-label="Close"><svg class="icon"><use href="#i-close"/></svg></button>
    </div>
  </div>

  <!-- Address bar -->
  <div class="toolbar">
    <button aria-label="Back"><svg class="icon s26"><use href="#i-back"/></svg></button>
    <button aria-label="Reload"><svg class="icon s26"><use href="#i-reload"/></svg></button>
    <div class="address">
      <svg class="icon s24"><use href="#i-lock"/></svg>
      <span class="url">https://<b>app.getfileflo.com</b>/documents</span>
      <button aria-label="Zoom out"><svg class="icon s24"><use href="#i-zoomout"/></svg></button>
      <button aria-label="Favorite"><svg class="icon s26"><use href="#i-star"/></svg></button>
    </div>
    <div class="browser-actions">
      <button aria-label="Extensions"><svg class="icon s26"><use href="#i-puzzle"/></svg></button>
      <button class="split" aria-label="Favorites"><svg class="icon s26"><use href="#i-favs"/></svg></button>
      <button aria-label="Profile"><svg class="s36"><use href="#i-farm"/></svg></button>
      <button aria-label="More"><svg class="icon s22"><use href="#i-dots"/></svg></button>
      <button aria-label="Copilot"><svg class="s36"><use href="#i-copilot"/></svg></button>
    </div>
  </div>

  <div class="viewport">
    <div class="page">

      <aside class="sidebar">
        <div class="brand">
          <svg class="brand-mark"><use href="#f-fileflo"/></svg>
          <span class="brand-name">File<span>Flo</span></span>
        </div>

        <nav class="nav">
          <div class="nav-label">Main Navigation</div>
          <a class="nav-item" href="#"><svg class="icon s22"><use href="#i-house"/></svg><span class="nav-text"><b>Dashboard</b><small>Overview and analytics</small></span></a>
          <a class="nav-item active" href="#"><svg class="icon s22"><use href="#i-filecopy"/></svg><span class="nav-text"><b>Document Library</b><small>Manage all documents</small></span></a>
          <a class="nav-item" href="#"><svg class="icon s22"><use href="#i-filesearch"/></svg><span class="nav-text"><b>Classification</b><small>AI document processing</small></span></a>
          <a class="nav-item" href="#"><svg class="icon s22"><use href="#i-kanban"/></svg><span class="nav-text"><b>Project Management</b><small>Project workflows</small></span></a>
          <a class="nav-item" href="#"><svg class="icon s22"><use href="#i-shield"/></svg><span class="nav-text"><b>Audits</b><small>People &amp; project audits</small></span></a>
          <a class="nav-item" href="#"><svg class="icon s22"><use href="#i-users"/></svg><span class="nav-text"><b>Employee Directory</b><small>Staff management</small></span></a>
        </nav>

        <nav class="nav nav-admin">
          <div class="nav-label">Administration</div>
          <a class="nav-item" href="#"><svg class="icon s22"><use href="#i-users"/></svg><span class="nav-text"><b>Team</b><small>Manage users and permissions</small></span></a>
          <a class="nav-item" href="#"><svg class="icon s22"><use href="#i-chart"/></svg><span class="nav-text"><b>Analytics</b><small>View reports and insights</small></span></a>
          <a class="nav-item" href="#"><svg class="icon s22"><use href="#i-gear"/></svg><span class="nav-text"><b>Settings</b><small>App configuration</small></span></a>
        </nav>

        <div class="usage">
          <span class="plan">Free</span>
          <div class="usage-row"><svg class="icon s16"><use href="#i-file"/></svg>Documents: 0/5</div>
          <div class="meter"></div>
          <div class="usage-row"><svg class="icon s16"><use href="#i-users"/></svg>Users: 1/1<svg class="icon s16 warn"><use href="#i-warn"/></svg></div>
          <div class="meter full"></div>
        </div>
      </aside>

      <div class="main">
        <header class="topbar">
          <button class="panel-toggle" aria-label="Toggle sidebar"><svg class="icon s22"><use href="#i-panel"/></svg></button>
          <div class="top-search">
            <svg class="icon s22"><use href="#i-search"/></svg>
            <input type="text" aria-label="Search" placeholder="Search documents, employees...">
          </div>
          <div class="top-actions">
            <button class="help" aria-label="Help"><svg class="icon s22"><use href="#i-help"/></svg></button>
            <button aria-label="Notifications"><svg class="icon s22"><use href="#i-bell"/></svg></button>
            <span class="avatar">TE</span>
            <span class="user"><b>test</b><small>Administrator</small></span>
          </div>
        </header>

        <main class="content">
          <h1>Document Library</h1>
          <p class="subtitle">Manage and organize your HR documents</p>
          <button class="btn primary"><svg class="icon s22"><use href="#i-plus"/></svg>Upload Documents</button>

          <section class="library">
            <div class="hero">
              <h2>Document Library</h2>
              <p class="hero-sub">Comprehensive view and management of all processed HR documents</p>
              <p class="hero-count">0 of 0 documents</p>
            </div>

            <div class="doc-search">
              <svg class="icon s28"><use href="#i-search"/></svg>
              <input type="text" aria-label="Search documents" placeholder="Search documents by name, type, employee, department, or content...">
              <button class="btn primary small"><svg class="icon s22"><use href="#i-funnel"/></svg>Advanced</button>
            </div>

            <div class="filters">
              <div class="select"><select aria-label="Category"><option>All Categories</option></select><svg class="icon s22"><use href="#i-chev"/></svg></div>
              <div class="select"><select aria-label="Type"><option>All Types</option></select><svg class="icon s22"><use href="#i-chev"/></svg></div>
              <div class="select short"><select aria-label="Sort by"><option>Date</option></select><svg class="icon s22"><use href="#i-chev"/></svg></div>
              <div class="filters-end">
                <div class="view-toggle">
                  <button class="on" aria-label="Grid view"><svg class="icon s22"><use href="#i-grid"/></svg></button>
                  <button aria-label="List view"><svg class="icon s22"><use href="#i-list"/></svg></button>
                </div>
                <button class="btn outline small"><svg class="icon s22"><use href="#i-download"/></svg>Export</button>
              </div>
            </div>

            <div class="empty">
              <div class="empty-icon"><svg class="icon"><use href="#i-file"/></svg></div>
              <h3>No Documents Yet</h3>
              <p>Start building your document library by uploading and classifying your HR documents. Our AI will automatically categorize and extract key information.</p>
              <div class="empty-actions">
                <button class="btn primary wide"><svg class="icon s22"><use href="#i-upload"/></svg>Upload Documents</button>
                <button class="btn outline wide"><svg class="icon s22"><use href="#i-plus"/></svg>Create New</button>
              </div>
            </div>
          </section>
        </main>
      </div>

      <div class="scrollbar"><i class="up"></i><i class="thumb"></i><i class="down"></i></div>
      <button class="fab" aria-label="Support"><svg class="icon s22"><use href="#i-help"/></svg></button>
    </div>
  </div>

  <!-- Windows taskbar -->
  <div class="taskbar">
    <div class="widget">
      <span class="widget-icon"><svg><use href="#t-widget"/></svg><span class="count">4</span></span>
      <span class="widget-text">Upcoming<small>Earnings</small></span>
    </div>
    <div class="apps">
      <button class="app" aria-label="Start"><svg><use href="#t-win"/></svg></button>
      <button class="task-search"><svg class="s26"><use href="#t-search"/></svg><span>Search</span><svg class="s36"><use href="#t-medal"/></svg><svg class="case"><use href="#t-case"/></svg></button>
      <button class="app"><svg><use href="#t-tasks"/></svg></button>
      <button class="app"><svg><use href="#t-pre"/></svg></button>
      <button class="app"><svg><use href="#i-copilot"/></svg></button>
      <button class="app"><svg><use href="#t-folder"/></svg></button>
      <button class="app"><svg><use href="#t-store"/></svg></button>
      <button class="app"><svg><use href="#t-m365"/></svg></button>
      <button class="app running"><svg><use href="#t-outlook"/></svg></button>
      <button class="app running"><svg><use href="#t-edge"/></svg><svg class="overlay"><use href="#t-person"/></svg></button>
      <button class="app running focused"><svg><use href="#t-edge"/></svg><svg class="overlay"><use href="#t-bag"/></svg></button>
      <button class="app running"><svg><use href="#t-word"/></svg></button>
    </div>
    <div class="tray">
      <svg class="icon s24 flip"><use href="#i-chev"/></svg>
      <svg class="s26"><use href="#t-cloud"/></svg>
      <div class="tray-group">
        <svg class="icon s24"><use href="#t-wifi"/></svg>
        <svg class="icon s24"><use href="#t-volume"/></svg>
        <svg class="icon s24"><use href="#t-battery"/></svg>
      </div>
      <div class="clock">11:24 PM<br>10/6/2025</div>
    </div>
  </div>

</body>
</html>
```

FILE: styles.css
```css
* {
  box-sizing: border-box;
}

body {
  margin: 0;
  height: 100vh;
  display: flex;
  flex-direction: column;
  overflow: hidden;
  background-color: #dedfe3;
  color: #020817;
  font-family: "Segoe UI", "Open Sans", "Noto Sans", sans-serif;
  font-size: 18px;
}

h1, h2, h3, p {
  margin: 0;
}

button {
  display: flex;
  align-items: center;
  justify-content: center;
  padding: 0;
  border: none;
  background: none;
  color: inherit;
  font: inherit;
}

input, select {
  font: inherit;
}

svg {
  flex: none;
}

.gradients {
  position: absolute;
  width: 0;
  height: 0;
}

.sprite {
  display: none;
}

.icon {
  fill: none;
  stroke: currentColor;
  stroke-width: 2;
  stroke-linecap: round;
  stroke-linejoin: round;
}

.s16 { width: 16px; height: 16px; }
.s22 { width: 22px; height: 22px; }
.s24 { width: 24px; height: 24px; }
.s26 { width: 26px; height: 26px; }
.s28 { width: 28px; height: 28px; }
.s36 { width: 36px; height: 36px; }

.copilot-gap {
  fill: #f3f3f3;
  fill-opacity: 0.6;
}

/* Tab strip */

.tabstrip {
  display: flex;
  flex: none;
  height: 51px;
  background-color: #aab0b3;
  color: #111111;
}

.tab-menu {
  width: 67px;
  padding-right: 7px;
}

.tabs {
  display: flex;
  flex: 1;
}

.tab {
  flex: 29 1 0;
  position: relative;
  padding-bottom: 3px;
}

.tab.narrow {
  flex-grow: 28;
}

.tab svg {
  width: 24px;
  height: 24px;
}

.tab::before {
  content: "";
  position: absolute;
  left: 0;
  top: 11px;
  width: 2px;
  height: 31px;
  background-color: #767a7d;
}

.tab.asleep svg {
  opacity: 0.5;
}

.tab.knot {
  color: #ffffff;
}

.tab.current {
  padding-bottom: 0;
  background-color: #dedfe3;
  border-radius: 12px 12px 0 0;
}

.tab.current::before,
.tab.current + .tab::before {
  display: none;
}

.tab.current svg {
  width: 20px;
  height: 20px;
}

.new-tab {
  width: 52px;
  padding-bottom: 4px;
}

.new-tab svg {
  width: 32px;
  height: 32px;
  stroke-width: 1;
}

.window-buttons {
  display: flex;
  width: 278px;
  padding-left: 70px;
}

.window-buttons button {
  flex: 1;
}

.window-buttons svg {
  width: 20px;
  height: 20px;
}

/* Address bar */

.toolbar {
  display: flex;
  flex: none;
  align-items: center;
  height: 59px;
  color: #222222;
}

.toolbar .icon {
  stroke-width: 1;
  stroke: #222222;
}

.toolbar > button {
  width: 50px;
}

.toolbar > button:first-child {
  width: 59px;
}

.address {
  display: flex;
  flex: 1;
  align-items: center;
  gap: 22px;
  height: 47px;
  margin-left: 12px;
  padding: 0 14px 0 10px;
  border: 1px solid #c9cccb;
  border-radius: 24px;
  background-color: #fdfdfd;
}

.url {
  flex: 1;
  margin-left: -6px;
  color: #5a5a5a;
  font-size: 20px;
}

.url b {
  color: #1a1a1a;
  font-weight: 400;
}

.browser-actions {
  display: flex;
  align-items: center;
  width: 296px;
  padding: 0 5px 0 10px;
}

.browser-actions button {
  flex: 1;
  height: 24px;
}

.browser-actions .split {
  border-left: 2px solid #b5b8bb;
}

/* Page frame */

.viewport {
  flex: 1;
  min-height: 0;
  padding: 0 6px 5px;
}

.page {
  display: flex;
  position: relative;
  height: 100%;
  overflow: hidden;
  border-radius: 12px;
  background-color: #f9fafc;
}

/* Sidebar */

.sidebar {
  display: flex;
  flex: none;
  flex-direction: column;
  width: 346px;
  background-color: #020817;
  color: #f8fafc;
}

.brand {
  display: flex;
  align-items: center;
  gap: 11px;
  height: 132px;
  padding-left: 42px;
  border-bottom: 1px solid #1d2330;
}

.brand-mark {
  width: 61px;
  height: 55px;
}

.brand-name {
  color: #f8f1e2;
  font-family: Lato, sans-serif;
  font-size: 40px;
  font-weight: 900;
}

.brand-name span {
  color: #5fd9fb;
}

.nav {
  display: flex;
  flex-direction: column;
  gap: 6px;
  padding: 26px 0 0 22px;
}

.nav-admin {
  padding-top: 68px;
}

.nav-label {
  height: 43px;
  padding-left: 21px;
  line-height: 43px;
  color: #a8abb2;
  font-size: 15px;
  font-weight: 600;
}

.nav-item {
  display: flex;
  align-items: center;
  gap: 11px;
  height: 43px;
  padding-left: 10px;
  overflow: hidden;
  border-radius: 14px;
  color: #f8fafc;
  text-decoration: none;
}

.nav-item.active {
  border-right: 3px solid #6ee0cf;
  background-color: #232936;
  color: #6ee0cf;
}

.nav-text b,
.nav-text small {
  display: block;
}

.nav-text b {
  font-size: 18px;
  font-weight: 600;
  line-height: 27px;
}

.nav-text small {
  font-size: 15px;
  line-height: 22px;
  opacity: 0.7;
}

.usage {
  margin: auto 11px 0;
  padding: 22px 22px 32px 21px;
  border-top: 1px solid #1d2330;
  font-size: 15px;
}

.plan {
  display: inline-block;
  padding: 0 14px;
  border-radius: 15px;
  background-color: #f1f5f9;
  color: #0f172a;
  line-height: 30px;
  font-weight: 600;
}

.usage-row {
  display: flex;
  align-items: center;
  gap: 11px;
  height: 22px;
  margin: 16px 0 10px;
}

.warn {
  color: #f59e2e;
}

.meter {
  height: 6px;
  border-radius: 3px;
  background-color: #f1f5f9;
}

.meter.full {
  background-color: #203656;
}

/* Top bar */

.main {
  display: flex;
  flex: 1;
  flex-direction: column;
  min-width: 0;
}

.topbar {
  display: flex;
  flex: none;
  align-items: center;
  height: 87px;
  padding: 0 48px 0 40px;
  border-bottom: 1px solid #e2e8f0;
  background-color: #fdfdfd;
}

.top-search {
  position: relative;
  width: 432px;
  margin-left: 29px;
}

.top-search svg {
  position: absolute;
  left: 16px;
  top: 15px;
  color: #64748b;
}

.top-search input {
  width: 100%;
  height: 51px;
  padding: 0 16px 0 54px;
  border: 1px solid #e2e8f0;
  border-radius: 16px;
  background-color: #f9fafc;
}

.top-search input::placeholder {
  color: #9aa3b2;
  opacity: 1;
}

.top-actions {
  display: flex;
  align-items: center;
  margin-left: auto;
}

.top-actions button {
  width: 76px;
}

.help {
  color: #64748b;
}

.avatar {
  width: 44px;
  height: 44px;
  margin: 0 16px 0 26px;
  border-radius: 50%;
  background-color: #203656;
  color: #ffffff;
  font-size: 15px;
  font-weight: 600;
  line-height: 44px;
  text-align: center;
}

.user b,
.user small {
  display: block;
  line-height: 24px;
}

.user b {
  font-weight: 600;
}

.user small {
  color: #64748b;
  font-size: 16px;
}

/* Content */

.content {
  flex: 1;
  margin: 44px 43px 0;
  padding: 32px 32px 0;
  background-image: linear-gradient(135deg, #f3f7fa, #ebeef4 45%, #e5e9f2 70%, #e0e6ed);
}

h1, h2 {
  font-size: 38px;
  font-weight: 700;
  line-height: 49px;
}

.subtitle {
  margin: 11px 0 21px;
  color: #64748b;
  font-size: 21px;
  line-height: 32px;
}

.btn {
  gap: 11px;
  height: 54px;
  padding: 0 21px;
  border-radius: 14px;
  font-weight: 600;
}

.btn.primary {
  background-color: #203656;
  color: #f8fafc;
}

.btn.outline {
  border: 1px solid #cfd6e0;
  background-color: #f9fafc;
}

.btn.small {
  gap: 22px;
  height: 48px;
  padding: 0 16px;
}

.btn.wide {
  gap: 21px;
}

.library {
  padding: 65px 33px 0;
}

.hero {
  padding: 32px;
  border-radius: 16px;
  background-image: linear-gradient(135deg, #1f3557, #5ab0a6 50%, #82d1cf);
  color: #ffffff;
}

.hero h2 {
  font-size: 36px;
}

.hero-sub {
  margin: 11px 0 22px;
  color: #e4ecee;
  font-size: 23px;
  line-height: 38px;
}

.hero-count {
  color: #d3dfe1;
  font-weight: 600;
  line-height: 27px;
}

.doc-search {
  position: relative;
  margin: 32px 0;
}

.doc-search input {
  display: block;
  width: 100%;
  height: 54px;
  padding: 0 180px 0 64px;
  border: 1px solid #cbd3df;
  border-radius: 16px;
  background-image: linear-gradient(90deg, #f9fafc, #fafefe);
}

.doc-search input::placeholder {
  color: #64748b;
  opacity: 1;
}

.doc-search > svg {
  position: absolute;
  left: 20px;
  top: 21px;
  color: #64748b;
}

.doc-search .btn {
  position: absolute;
  top: 11px;
  right: 12px;
  height: 47px;
}

.filters {
  display: flex;
  align-items: center;
  gap: 16px;
}

.select {
  position: relative;
  width: 259px;
}

.select.short {
  width: 216px;
}

.select select {
  width: 100%;
  height: 54px;
  padding: 0 16px;
  appearance: none;
  border: 1px solid #b9c6d4;
  border-radius: 14px;
  background-image: linear-gradient(135deg, #e6e9f0, #e5ecef);
  color: #020817;
}

.select svg {
  position: absolute;
  top: 16px;
  right: 16px;
  color: #7c8492;
}

.filters-end {
  display: flex;
  align-items: center;
  gap: 11px;
  margin-left: auto;
}

.view-toggle {
  display: flex;
  height: 62px;
  padding: 6px 5px;
  border: 1px solid #c0c9d5;
  border-radius: 16px;
  background-color: #e2e7ee;
}

.view-toggle button {
  width: 54px;
  height: 48px;
  border-radius: 13px;
}

.view-toggle .on {
  background-color: #203656;
  color: #f8fafc;
}

.empty {
  display: flex;
  flex-direction: column;
  align-items: center;
  padding: 86px 32px;
  border: 1px solid #cfd7e1;
  border-radius: 16px;
  background-image: linear-gradient(135deg, #e6e9ef, #e4eaed 35%, #e4e8f0 60%, #dfe7ed);
  box-shadow: 0 2px 3px rgba(2, 8, 23, 0.04);
}

.empty-icon {
  display: flex;
  align-items: center;
  justify-content: center;
  width: 130px;
  height: 130px;
  border-radius: 50%;
  background-image: linear-gradient(135deg, #203656, #3b5580);
  color: #ffffff;
}

.empty-icon svg {
  width: 65px;
  height: 65px;
}

.empty h3 {
  margin: 32px 0 16px;
  font-size: 31px;
  font-weight: 600;
  line-height: 44px;
}

.empty p {
  max-width: 605px;
  color: #64748b;
  font-size: 21px;
  line-height: 35px;
  text-align: center;
}

.empty-actions {
  display: flex;
  gap: 16px;
  margin-top: 32px;
}

.scrollbar {
  display: flex;
  flex: none;
  flex-direction: column;
  align-items: center;
  width: 23px;
  padding: 14px 0 10px;
  background-color: #fbfcfd;
}

.scrollbar .up,
.scrollbar .down {
  border: 7px solid transparent;
}

.scrollbar .up {
  border-top: 0;
  border-bottom: 11px solid #8a8a8a;
}

.scrollbar .down {
  border-bottom: 0;
  border-top: 11px solid #8a8a8a;
}

.scrollbar .thumb {
  width: 13px;
  height: calc(87% - 6px);
  margin: 11px 0 auto;
  border-radius: 7px;
  background-color: #8a8a8a;
}

.fab {
  position: absolute;
  right: 55px;
  bottom: 32px;
  width: 65px;
  height: 65px;
  border-radius: 50%;
  background-color: #203656;
  color: #ffffff;
  box-shadow: 0 12px 18px rgba(2, 8, 23, 0.14);
}

/* Taskbar */

.taskbar {
  display: flex;
  flex: none;
  align-items: center;
  justify-content: space-between;
  height: 72px;
  padding-bottom: 2px;
  border-top: 2px solid #434343;
  background-color: #202020;
  color: #ffffff;
}

.widget {
  display: flex;
  flex: 1;
  align-items: center;
  gap: 14px;
  padding-left: 33px;
  line-height: 24px;
}

.widget-icon {
  position: relative;
  width: 28px;
  height: 36px;
}

.widget-icon svg {
  width: 28px;
  height: 36px;
}

.count {
  position: absolute;
  top: -8px;
  left: 13px;
  width: 24px;
  height: 24px;
  border-radius: 50%;
  background-color: #ff99a4;
  color: #111111;
  text-align: center;
}

.widget-text small {
  display: block;
  color: #c8c8c8;
  font-size: 18px;
}

.apps {
  display: flex;
  align-items: center;
  padding-right: 4px;
}

.app {
  position: relative;
  width: 66px;
  height: 60px;
}

.app svg {
  width: 36px;
  height: 36px;
}

.app .overlay {
  position: absolute;
  left: 15px;
  bottom: 10px;
  width: 18px;
  height: 18px;
}

.task-search {
  gap: 12px;
  width: 330px;
  height: 48px;
  margin: 0 4px 0 5px;
  padding: 0 14px 0 16px;
  border: 1px solid #575757;
  border-radius: 24px;
  background-color: #3e3e3e;
  color: #d0d0d0;
  font-size: 20px;
}

.task-search span {
  flex: 1;
  text-align: left;
}

.task-search .case {
  width: 26px;
  height: 36px;
  margin-left: -12px;
}

.app.running::after {
  content: "";
  position: absolute;
  bottom: 0;
  left: 28px;
  width: 10px;
  height: 5px;
  border-radius: 3px;
  background-color: #9a9a9a;
}

.app.focused {
  border-radius: 6px;
  background-color: #2f2f2f;
}

.app.focused::after {
  left: 21px;
  width: 24px;
  background-color: #4cc2ff;
}

.tray {
  display: flex;
  flex: 1;
  align-items: center;
  justify-content: flex-end;
  gap: 22px;
  padding-right: 30px;
}

.tray-group {
  display: flex;
  gap: 12px;
}

.tray .flip {
  transform: rotate(180deg);
}

.clock {
  margin-left: 4px;
  font-size: 17px;
  line-height: 24px;
  text-align: right;
}
```
